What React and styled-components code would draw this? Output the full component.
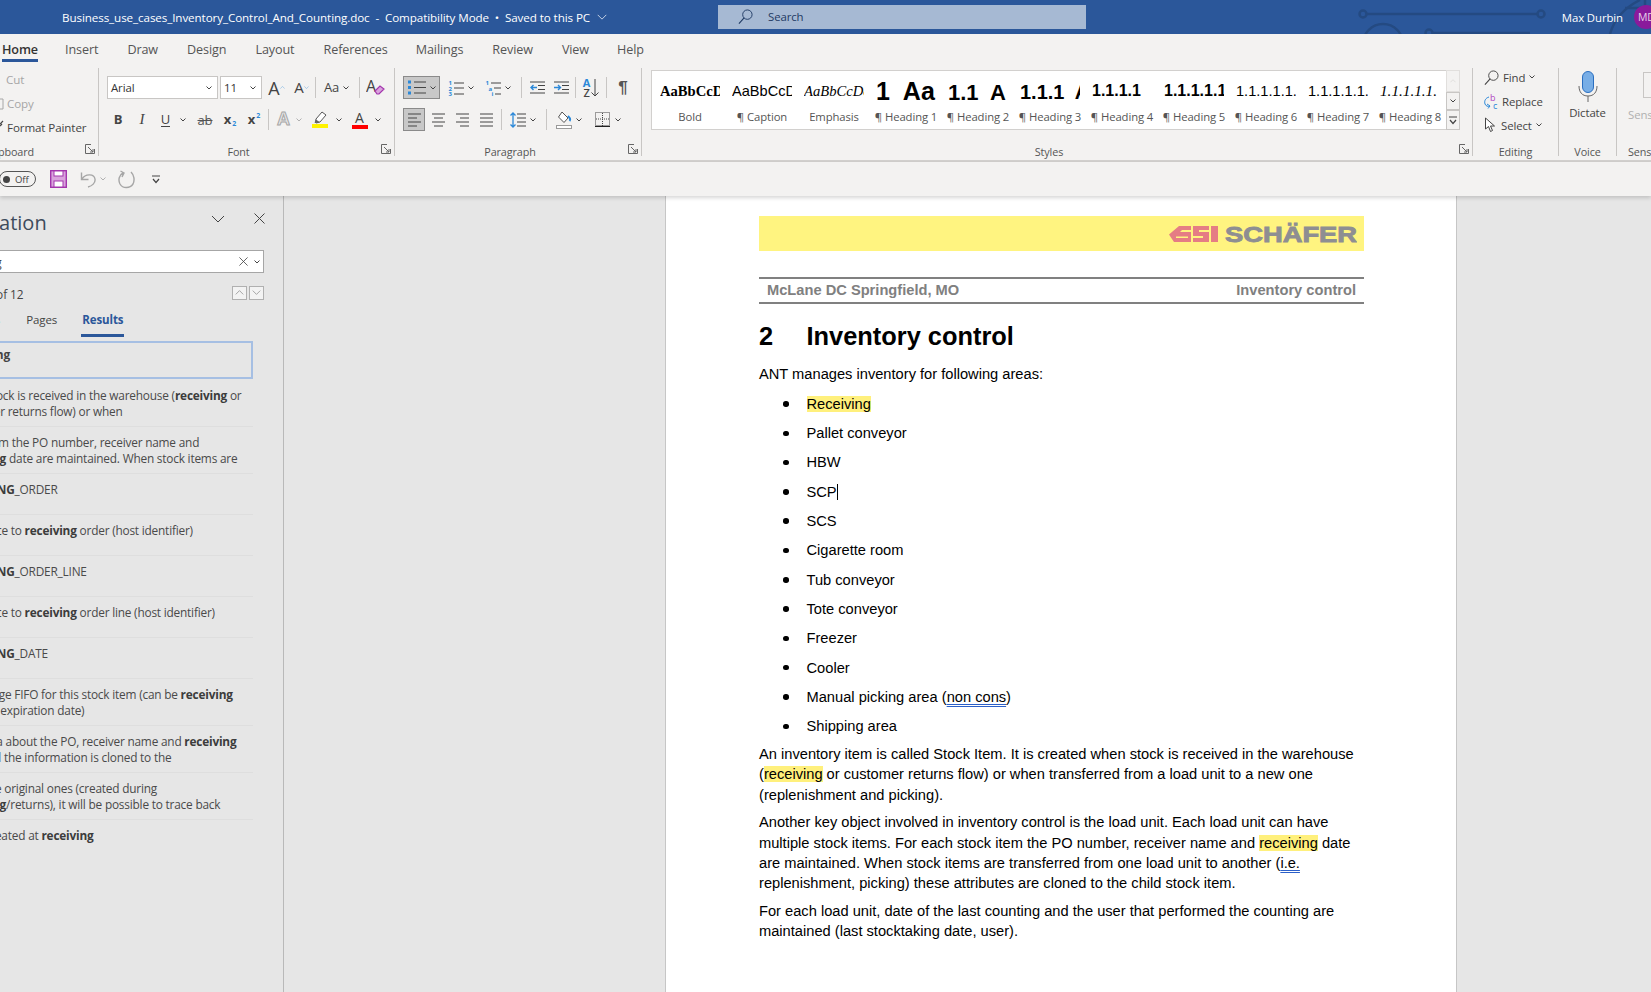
import React from "react";
import styled, { createGlobalStyle } from "styled-components";

const UI = `"Open Sans", "Noto Sans", sans-serif`;
const DOC = `"Liberation Sans", Arial, sans-serif`;
const SERIF = `"Liberation Serif", serif`;

const Global = createGlobalStyle`
  html, body { margin: 0; padding: 0; overflow: hidden; background: #e6e6e6; }
  * { box-sizing: border-box; }
`;

const App_ = styled.div`
  width: 1651px; height: 992px; display: flex; flex-direction: column; overflow: hidden;
  font-family: ${UI}; font-size: 11px; color: #444; letter-spacing: -0.1px;
`;

/* Title bar */
const TitleBar = styled.header`
  position: relative; flex: 0 0 34px; background: #2b579a; color: #fff; display: flex; align-items: center; padding-left: 62px; overflow: hidden;
`;
const DocTitle = styled.div`
  width: 656px; flex: none; display: flex; align-items: center; gap: 4px; white-space: pre; position: relative; font-size: 11.65px; color: #fff;
`;
const SearchBox = styled.div`
  width: 368px; height: 24px; background: #a6b9d3; color: #1f3a63; display: flex; align-items: center; gap: 15px; padding: 0 0 1px 20px; position: relative; font-size: 11.4px;
`;
const UserName = styled.div`
  margin-left: auto; position: relative; font-size: 11.4px; color: #fff; margin-right: 11px;
`;
const Avatar = styled.div`
  width: 24px; height: 24px; border-radius: 50%; background: #8a1a9b; color: #e6d3ea; font-size: 10.5px; display: flex; align-items: center; padding-left: 4px; flex: none; position: relative; margin-right: -7px; overflow: hidden;
`;
const Circuit = styled.svg`
  position: absolute; left: 1340px; top: 0;
`;

/* Tabs */
const TabBar = styled.nav`
  flex: 0 0 26px; min-height: 0; background: #f3f2f1; display: flex; padding-left: 2px; z-index: 3;
`;
const Tab = styled.div`
  margin-left: ${(p) => p.$ml}px; height: 28px; padding: 7px 0 0; font-size: 12.6px; line-height: 17px; color: ${(p) => (p.$active ? "#333" : "#555")}; font-weight: ${(p) => (p.$active ? 600 : 400)}; border-bottom: ${(p) => (p.$active ? "3px solid #2b579a" : "none")}; white-space: nowrap;
`;

/* Ribbon */
const Ribbon = styled.section`
  flex: 0 0 102px; background: #f3f2f1; border-bottom: 2px solid #d2d0ce; display: flex; padding-top: 8px; z-index: 2;
`;
const Group = styled.div`
  position: relative; flex: none; width: ${(p) => p.$w}px; height: 88px; border-right: 1px solid #c8c6c4; display: flex; flex-direction: column; ${(p) => p.$last && "border-right: none;"}
`;
const GroupBody = styled.div`
  height: 76px; padding: ${(p) => p.$pad || "8px 0 0 8px"}; display: flex; flex-direction: column; gap: ${(p) => p.$gap ?? 9}px;
`;
const ClipBody = styled.div`
  height: 76px; margin-top: -1px; margin-bottom: 1px; display: flex; flex-direction: column;
`;
const GroupLabel = styled.div`
  height: 12px; line-height: 15px; text-align: center; font-size: 10.8px; color: #555; white-space: nowrap; padding-right: ${(p) => p.$pr || 0}px; ${(p) => p.$clip && "text-align: left; margin-left: -14px;"} ${(p) => p.$left && "text-align: left; padding-left: 11px;"}
`;
const Launcher = styled.svg`
  position: absolute; right: 3px; bottom: 2px;
`;
const Row = styled.div`
  display: flex; align-items: center; height: 23px; flex: none;
`;
const Slot = styled.div`
  flex: none; width: ${(p) => p.$w}px; margin-left: ${(p) => p.$ml || 0}px; height: 23px; display: flex; align-items: center; justify-content: center; gap: ${(p) => p.$gap ?? 4}px; color: #444; position: relative;
`;
const PressedSlot = styled(Slot)`
  background: #c8c8c8; border: 1px solid #8a8a8a;
`;
const Sep = styled.div`
  flex: none; width: 1px; height: 21px; background: #c8c6c4; margin-left: ${(p) => p.$ml || 0}px;
`;
const Combo = styled.div`
  flex: none; width: ${(p) => p.$w}px; margin-left: ${(p) => p.$ml || 0}px; height: 23px; background: #fff; border: 1px solid #c8c6c4; display: flex; align-items: center; justify-content: space-between; padding: 0 5px 0 3px; font-size: 11.4px; color: #333;
`;
const ClipRow = styled.div`
  height: 24px; display: flex; align-items: center; gap: 3px; padding-left: ${(p) => (p.$icon ? 0 : 6)}px; font-size: 11.6px; color: ${(p) => (p.$dim ? "#a6a6a6" : "#444")}; white-space: nowrap;
`;
const GlyphA = styled.span`
  font-family: ${UI}; font-size: ${(p) => p.$s || 17}px; line-height: 1; color: #444; font-weight: ${(p) => p.$b || 400};
`;
const SerifI = styled.span`
  font-family: ${SERIF}; font-style: italic; font-size: 15px; color: #444;
`;
const UnderU = styled.span`
  font-size: 13px; color: #444; border-bottom: 1px solid #444; line-height: 14px;
`;
const StrikeAb = styled.span`
  font-size: 13px; color: #555; text-decoration: line-through;
`;
const Script = styled.span`
  font-size: 7px; color: #2b88d8; font-weight: 700; position: relative; top: ${(p) => p.$top}px; margin-left: 1px;
`;
const Effect = styled.span`
  font-family: ${DOC}; font-weight: 700; font-size: 18px; color: #e8e8e8; -webkit-text-stroke: 1px #a6a6a6;
`;
const ColorA = styled.span`
  display: flex; flex-direction: column; align-items: center; width: 16px; font-size: 14px; line-height: 13px; color: #444;
`;
const ColorBar = styled.i`
  display: block; width: 16px; height: 4px; background: ${(p) => p.$c}; margin-top: 1px;
`;
const Pilcrow = styled.span`
  font-family: ${DOC}; font-size: 17px; font-weight: 700; color: #555;
`;
const SortStack = styled.span`
  display: flex; flex-direction: column; line-height: 10px; font-size: 11px; font-weight: 600; align-items: center;
`;
const SortA = styled.b`
  color: #2b88d8; font-size: 11px; font-weight: 700;
`;

/* Styles */
const StylesBody = styled.div`
  padding: 2px 0 0 9px; height: 76px; display: flex;
`;
const Gallery = styled.div`
  width: 795px; height: 60px; background: #fff; border: 1px solid #d2d0ce; border-right: none; display: flex; padding-left: 2px; overflow: hidden;
`;
const StyleItem = styled.div`
  flex: none; width: 72px; display: flex; flex-direction: column; align-items: center;
`;
const Preview = styled.div`
  width: 60px; height: 30px; overflow: hidden; white-space: pre; padding-top: ${(p) => p.$top}px; font-family: ${(p) => (p.$serif ? SERIF : DOC)}; font-size: ${(p) => p.$s}px; line-height: ${(p) => p.$lh || 20}px; font-weight: ${(p) => (p.$b ? 700 : 400)}; font-style: ${(p) => (p.$i ? "italic" : "normal")}; color: #000; letter-spacing: 0;
`;
const StyleName = styled.div`
  margin-top: 8px; font-size: 11.3px; line-height: 16px; color: #555; white-space: nowrap;
`;
const ScrollCol = styled.div`
  width: 14px; height: 60px; display: flex; flex-direction: column;
`;
const ScrollBtn = styled.div`
  flex: ${(p) => p.$f}; border: 1px solid ${(p) => (p.$dim ? "#e1dfdd" : "#c8c6c4")}; background: #f3f2f1; display: flex; align-items: center; justify-content: center;
`;
const EditRow = styled.div`
  height: 20px; display: flex; align-items: center; gap: 4px; font-size: 11.4px; color: #444;
`;
const EditCol = styled.div`
  height: 76px; padding-left: 11px; margin-top: -1px; margin-bottom: 1px; display: flex; flex-direction: column; gap: 4px;
`;
const VoiceCol = styled.div`
  height: 76px; display: flex; flex-direction: column; align-items: center; padding-top: 3px; gap: 3px; font-size: 11.4px; color: #444;
`;
const SensCol = styled.div`
  height: 76px; padding: 4px 0 0 11px; display: flex; flex-direction: column; color: #b0b0b0; font-size: 11.4px; overflow: hidden; white-space: nowrap;
`;
const SensIcon = styled.div`
  width: 30px; height: 26px; border: 1px solid #c8c6c4; margin: 0 0 9px 15px; flex: none;
`;

/* QAT */
const Qat = styled.div`
  flex: 0 0 34px; background: #f3f2f1; display: flex; align-items: center; box-shadow: 0 2px 4px rgba(0,0,0,0.16); z-index: 2; position: relative;
`;
const Toggle = styled.div`
  width: 37px; height: 16px; margin-left: -1px; border: 1px solid #555; border-radius: 8px; display: flex; align-items: center; padding-left: 3px; gap: 5px; font-size: 9.5px; color: #444;
`;
const Dot = styled.i`
  width: 7px; height: 7px; border-radius: 50%; background: #444; display: block;
`;
const QatIcon = styled.div`
  margin-left: ${(p) => p.$ml}px; display: flex; align-items: center; flex: none;
`;

/* Workspace */
const Work = styled.main`
  flex: 1; min-height: 0; display: flex; background: #e6e6e6;
`;
const Pane = styled.aside`
  width: 284px; flex: none; border-right: 1px solid #b9b9b9; overflow: hidden; background: #e6e6e6;
`;
const PaneInner = styled.div`
  width: 333px; margin-left: -50px; color: #444;
`;
const PaneHead = styled.div`
  height: 54px; display: flex; align-items: center; position: relative; padding-left: 0;
`;
const PaneTitle = styled.div`
  font-size: 20px; color: #3d4b5c; letter-spacing: 0; margin: -2px 0 0 -3px;
`;
const PaneTools = styled.div`
  margin-left: auto; display: flex; align-items: center; gap: 29px; margin-top: -9px; margin-right: 18px;
`;
const PaneSearch = styled.div`
  height: 23px; width: 314px; background: #fff; border: 1px solid #a6a6a6; display: flex; align-items: center; padding: 0 3px 0 2px; font-size: 11.85px; color: #444;
`;
const PaneSearchTools = styled.div`
  margin-left: auto; display: flex; align-items: center; gap: 6px;
`;
const Status = styled.div`
  margin-top: 12px; height: 15px; display: flex; align-items: center; width: 314px; font-size: 11.85px; padding-top: 2px;
`;
const StepBtn = styled.div`
  width: 15px; height: 14px; border: 1px solid #b0b0b0; background: #f3f3f3; display: flex; align-items: center; justify-content: center; margin-top: -2px; margin-left: ${(p) => (p.$auto ? "auto" : "2px")};
`;
const PaneTabs = styled.div`
  margin-top: 8px; display: flex; height: 29px; padding-left: 22px;
`;
const PaneTab = styled.div`
  margin-left: ${(p) => p.$ml}px; padding: 4px 1px 0; height: 29px; line-height: 16px; font-size: 11.5px; color: ${(p) => (p.$active ? "#2b579a" : "#444")}; font-weight: ${(p) => (p.$active ? 700 : 400)}; border-bottom: ${(p) => (p.$active ? "3px solid #2b579a" : "none")};
`;
const Selected = styled.div`
  margin-top: 4px; width: 303px; height: 38px; border: 2px solid #a6bfe3; padding: 3px 0 0 5px; font-size: 11.85px; line-height: 16px; font-weight: 700; color: #444;
`;
const Results = styled.div`
  margin-top: 1px; width: 303px; padding-left: 4px;
`;
const Result = styled.div`
  padding: 7px 0 ${(p) => (p.$single ? 17 : 7)}px; border-bottom: 1px solid #dedede; font-size: 11.85px; line-height: 16px; white-space: nowrap; color: #4a4a4a; letter-spacing: -0.2px; ${(p) => p.$last && "border-bottom: none;"} b { color: #3c3c3c; }
`;
const Nudge = styled.span`
  margin-left: ${(p) => p.$x}px;
`;

const Canvas = styled.div`
  flex: 1; min-width: 0; padding-left: 381px;
`;
const Page = styled.article`
  width: 792px; height: 100%; background: #fff; border-left: 1px solid #c6c6c6; border-right: 1px solid #c6c6c6; padding: 20px 92px 0 93px; font-family: ${DOC}; font-size: 14.67px; line-height: 20.4px; color: #000; letter-spacing: 0;
`;
const Banner = styled.div`
  height: 35px; background: #fff480; display: flex; justify-content: flex-end; align-items: center; padding-right: 7px;
`;
const RunHead = styled.div`
  margin-top: 26px; height: 27px; border-top: 2px solid #808080; border-bottom: 2px solid #808080; display: flex; justify-content: space-between; align-items: center; padding: 0 8px; font-weight: 700; color: #808080;
`;
const H1 = styled.h1`
  margin: 12px 0 0; height: 40px; font-size: 25.4px; line-height: 40px; font-weight: 700; display: flex; color: #000;
`;
const HNum = styled.span`
  width: 47.5px; flex: none;
`;
const P = styled.p`
  margin: ${(p) => p.$mt}px 0 0;
`;
const Ul = styled.ul`
  margin: 5px 0 0; padding: 0 0 0 24px; list-style: none;
`;
const Li = styled.li`
  height: 29.3px; display: flex; align-items: center;
  &::before { content: ""; width: 5.5px; height: 5.5px; border-radius: 50%; background: #000; margin-right: 18px; flex: none; }
`;
const LiText = styled.span`
  line-height: 20.4px;
`;
const Mark = styled.mark`
  background: #fff07c; color: #000;
`;
const Proof = styled.span`
  text-decoration: underline double #2b5fc8; text-underline-offset: 2px;
`;
const Cursor = styled.i`
  display: inline-block; width: 1px; height: 16px; background: #000; vertical-align: -3px;
`;
const LogoSvg = styled.svg`
  display: block;
`;

/* Icons */
const Caret = ({ c = "#444", w = 6 }) => (
  <svg width={w} height="4" viewBox="0 0 6 4"><polyline points="0.5,0.5 3,3 5.5,0.5" fill="none" stroke={c} strokeWidth="1" /></svg>
);
const Launch = () => (
  <Launcher width="10" height="10" viewBox="0 0 10 10"><path d="M9.5 9.5H.5V.5H6M9.5 9.5V5M3 3l5 5M8 5v3H5" fill="none" stroke="#666" strokeWidth="1" /></Launcher>
);
const Lines = ({ items, w = 15 }) => (
  <svg width={w} height="15" viewBox={`0 0 ${w} 15`}>
    {items.map(([x1, x2, y], i) => <line key={i} x1={x1} x2={x2} y1={y} y2={y} stroke="#444" strokeWidth="1" />)}
  </svg>
);
const Bullets = () => (
  <svg width="18" height="15" viewBox="0 0 18 15">
    {[2, 7.5, 13].map((y) => (<g key={y}><rect x="0" y={y - 1.5} width="3" height="3" fill="#2b88d8" /><line x1="6" x2="18" y1={y} y2={y} stroke="#444" /></g>))}
  </svg>
);
const Numbered = ({ multi }) => (
  <svg width="16" height="16" viewBox="0 0 16 16" fontFamily="Open Sans" fontSize="6" fontWeight="700" fill="#2b88d8">
    <text x="0.500" y="5">1</text>
    <text x={multi ? 3.5 : 0.5} y="10.500">{multi ? "a" : "2"}</text>
    <text x={multi ? 6.5 : 0.5} y="16">{multi ? "i" : "3"}</text>
    <line x1="6" x2="16" y1="3" y2="3" stroke="#444" />
    <line x1={multi ? 9 : 6} x2="16" y1="8" y2="8" stroke="#444" />
    <line x1={multi ? 10 : 6} x2="16" y1="14" y2="14" stroke="#444" />
  </svg>
);
const Indent = ({ inc }) => (
  <svg width="15" height="13" viewBox="0 0 15 13">
    <line x1="0" x2="15" y1="1" y2="1" stroke="#444" /><line x1="0" x2="15" y1="12" y2="12" stroke="#444" />
    <line x1="8" x2="15" y1="4.5" y2="4.5" stroke="#444" /><line x1="8" x2="15" y1="8.5" y2="8.5" stroke="#444" />
    <path d={inc ? "M0 6.5h6M4 4l2.5 2.5L4 9" : "M7 6.5H1M3.5 4L1 6.5 3.5 9"} fill="none" stroke="#2b88d8" strokeWidth="1.4" />
  </svg>
);
const LineSpacing = () => (
  <svg width="16" height="16" viewBox="0 0 16 16">
    <path d="M3 1v14M.5 3.5L3 1l2.5 2.5M.5 12.5L3 15l2.5-2.5" fill="none" stroke="#2b88d8" strokeWidth="1.3" />
    {[2, 6, 10, 14].map((y) => <line key={y} x1="7" x2="16" y1={y} y2={y} stroke="#444" />)}
  </svg>
);
const Shading = () => (
  <svg width="16" height="18" viewBox="0 0 16 18">
    <path d="M6 1l6 6-4 4.5-5.5-5.5z" fill="#fff" stroke="#555" />
    <path d="M12 5c2 2 2.5 4 1.5 5" fill="none" stroke="#2b88d8" strokeWidth="2" />
    <rect x=".5" y="14.5" width="15" height="3" fill="#fff" stroke="#9a9a9a" />
  </svg>
);
const Borders = () => (
  <svg width="15" height="15" viewBox="0 0 15 15">
    <rect x=".5" y=".5" width="14" height="13" fill="none" stroke="#444" strokeDasharray="1 1" />
    <path d="M7.5 1v13M1 7h13" stroke="#444" strokeDasharray="1 1" />
    <line x1="0" x2="15" y1="14.5" y2="14.5" stroke="#222" />
  </svg>
);
const Eraser = () => (
  <svg width="19" height="17" viewBox="0 0 19 17">
    <text x="0" y="13" fontFamily="Open Sans" fontSize="16" fill="#444">A</text>
    <path d="M9 12l5-5 4 3-5 5h-2z" fill="#d9a3dd" stroke="#a336ad" strokeWidth="1.2" />
  </svg>
);
const Highlighter = () => (
  <svg width="16" height="17" viewBox="0 0 16 17">
    <path d="M10 1l4 3-6 7-4 1-.5-1 .5-3z" fill="#fff" stroke="#555" />
    <path d="M4 8.5l3.5 2.5-4 1-1-.5z" fill="#666" />
    <rect x="0" y="13" width="16" height="4" fill="#fff200" />
  </svg>
);
const Mag = ({ s = 16, c = "#444" }) => (
  <svg width={s} height={s} viewBox="0 0 16 16"><circle cx="10" cy="6" r="5" fill="none" stroke={c} /><line x1="6.5" y1="9.5" x2="1" y2="15.5" stroke={c} strokeWidth="1.2" /></svg>
);
const ReplaceIcon = () => (
  <svg width="14" height="17" viewBox="0 0 14 17">
    <text x="6" y="8" fontFamily="Open Sans" fontSize="9" fill="#b146c2">b</text>
    <text x="9" y="16" fontFamily="Open Sans" fontSize="9" fill="#2b88d8">c</text>
    <path d="M5 4C1.5 5 0 8 1 11c.8 2 3 3 5 2M3 11l3 2-2 2.500" fill="none" stroke="#2b88d8" />
  </svg>
);
const Arrow = () => (
  <svg width="13" height="16" viewBox="0 0 13 16"><path d="M1.500 1v11l3-2.500 2 5 2-1-2-4.500h4z" fill="#fff" stroke="#444" /></svg>
);
const Mic = () => (
  <svg width="20" height="31" viewBox="0 0 20 31">
    <rect x="4.500" y="0.500" width="11" height="21" rx="5.500" fill="#78aee6" stroke="#2b6fc0" />
    <path d="M1 15c0 6 3 10 9 10s9-4 9-10" fill="none" stroke="#666" />
    <line x1="10" y1="25" x2="10" y2="31" stroke="#666" />
  </svg>
);
const Save = () => (
  <svg width="17" height="18" viewBox="0 0 17 18">
    <rect x=".7" y=".7" width="15.600" height="16.600" fill="#d9a3dd" stroke="#a336ad" strokeWidth="1.400" />
    <rect x="4" y="1" width="9" height="5" fill="#fff" stroke="#a336ad" />
    <rect x="4" y="11" width="9" height="6" fill="#fff" stroke="#a336ad" />
  </svg>
);
const Undo = () => (
  <svg width="16" height="17" viewBox="0 0 16 17"><path d="M2 8c3-5 12-6 13 0 .6 4-3 7-7 8M1.500 1.500V8.500h7" fill="none" stroke="#a6a6a6" strokeWidth="1.400" /></svg>
);
const Redo = () => (
  <svg width="17" height="19" viewBox="0 0 17 19"><path d="M5 3C1 5 0 10 2 14c3 5 10 4.500 13 0 2-4 1-9-2-12M2.500 1L6 3 4 7" fill="none" stroke="#a6a6a6" strokeWidth="1.400" /></svg>
);
const Customize = () => (
  <svg width="8" height="9" viewBox="0 0 8 9"><line x1="0" x2="8" y1="1" y2="1" stroke="#444" /><polyline points="1,4 4,7.500 7,4" fill="none" stroke="#444" strokeWidth="1.200" /></svg>
);
const Close = ({ s = 11, c = "#444" }) => (
  <svg width={s} height={s} viewBox="0 0 11 11"><path d="M.5.5l10 10M10.500.5l-10 10" stroke={c} /></svg>
);
const Chev = ({ up, w = 14, h = 8, c = "#444" }) => (
  <svg width={w} height={h} viewBox="0 0 14 8"><polyline points={up ? "1,7 7,1 13,7" : "1,1 7,7 13,1"} fill="none" stroke={c} /></svg>
);
const CopySliver = () => (
  <svg width="4" height="14" viewBox="0 0 4 14"><path d="M0 3h3v10H0" fill="none" stroke="#a6a6a6" /></svg>
);
const BrushSliver = () => (
  <svg width="4" height="14" viewBox="0 0 4 14"><path d="M0 4l3-3M0 6l2-2" fill="none" stroke="#444" strokeWidth="1.200" /></svg>
);

const Logo = () => (
  <LogoSvg width="188" height="26" viewBox="0 0 188 26">
    <g transform="translate(0 5)">
      <path d="M0 8.500L10 0h12v4h-9l-2 2h11v10H5z" fill="#e57d84" />
      <path d="M24 0h16v4H30v2h10v10H24v-4h10v-2H24z" fill="#e57d84" />
      <rect x="42" y="0" width="7" height="16" fill="#e57d84" />
      <rect x="7" y="10.500" width="12" height="1.500" fill="#fff480" />
    </g>
    <text x="56" y="21" fontFamily={DOC} fontWeight="700" fontSize="22" fill="#8e8e92" stroke="#8e8e92" strokeWidth="0.900" textLength="132" lengthAdjust="spacingAndGlyphs">SCHÄFER</text>
  </LogoSvg>
);

const styleItems = [
  { name: "Bold", text: "AaBbCcDd", serif: true, b: true, s: 14.6, top: 10 },
  { name: "¶ Caption", text: "AaBbCcDd", s: 14.6, top: 10 },
  { name: "Emphasis", text: "AaBbCcDd", serif: true, i: true, s: 14.6, top: 10 },
  { name: "¶ Heading 1", text: "1  Aa", b: true, s: 25, top: 5, lh: 30 },
  { name: "¶ Heading 2", text: "1.1  A", b: true, s: 22, top: 8, lh: 28 },
  { name: "¶ Heading 3", text: "1.1.1  A", b: true, s: 20, top: 9, lh: 24 },
  { name: "¶ Heading 4", text: "1.1.1.1", b: true, s: 16, top: 10 },
  { name: "¶ Heading 5", text: "1.1.1.1.1", b: true, s: 16, top: 10 },
  { name: "¶ Heading 6", text: "1.1.1.1.1.", s: 14.6, top: 10 },
  { name: "¶ Heading 7", text: "1.1.1.1.1.", s: 14.6, top: 10 },
  { name: "¶ Heading 8", text: "1.1.1.1.1.", serif: true, i: true, s: 15.2, top: 10 },
];
const tabs = [["Home", 0], ["Insert", 27], ["Draw", 29], ["Design", 29], ["Layout", 29], ["References", 29], ["Mailings", 28], ["Review", 29], ["View", 29], ["Help", 28]];
const areas = ["Pallet conveyor", "HBW"];
const areas2 = ["SCS", "Cigarette room", "Tub conveyor", "Tote conveyor", "Freezer", "Cooler"];

export default function App() {
  return (
    <App_>
      <Global />
      <TitleBar>
        <Circuit width="311" height="36" viewBox="0 0 311 36">
          <g fill="none" stroke="#244a82" strokeWidth="2.500">
            <circle cx="23" cy="14" r="3.500" /><line x1="27" x2="197" y1="14" y2="14" /><circle cx="201" cy="14" r="3.500" />
            <circle cx="43" cy="44" r="20" /><circle cx="89" cy="33" r="3.500" /><line x1="93" x2="190" y1="33" y2="33" />
            <path d="M270 34c4-14 14-26 30-34M285 8h26M305 0v20" />
          </g>
        </Circuit>
        <DocTitle>
          Business_use_cases_Inventory_Control_And_Counting.doc  -  Compatibility Mode  •  Saved to this PC <Chev w={10} h={6} c="#fff" />
        </DocTitle>
        <SearchBox><Mag s={15} c="#1f3a63" />Search</SearchBox>
        <UserName>Max Durbin</UserName>
        <Avatar>MD</Avatar>
      </TitleBar>

      <TabBar>
        {tabs.map(([t, ml], i) => <Tab key={t} $ml={ml} $active={i === 0}>{t}</Tab>)}
      </TabBar>

      <Ribbon>
        <Group $w={99}>
          <ClipBody>
            <ClipRow $dim>Cut</ClipRow>
            <ClipRow $dim $icon><CopySliver />Copy</ClipRow>
            <ClipRow $icon><BrushSliver />Format Painter</ClipRow>
          </ClipBody>
          <GroupLabel $clip>Clipboard</GroupLabel>
          <Launch />
        </Group>

        <Group $w={296}>
          <GroupBody>
            <Row>
              <Combo $w={111}>Arial<Caret /></Combo>
              <Combo $w={42} $ml={2}>11<Caret /></Combo>
              <Slot $w={23} $ml={3} $gap={0}><GlyphA $s={18}>A</GlyphA><Chev w={5} h={3} c="#2b88d8" up /></Slot>
              <Slot $w={19} $ml={4} $gap={0}><GlyphA $s={15}>A</GlyphA><Chev w={5} h={3} c="#2b88d8" /></Slot>
              <Sep $ml={4} />
              <Slot $w={35} $ml={3}><GlyphA $s={13}>Aa</GlyphA><Caret /></Slot>
              <Sep $ml={5} />
              <Slot $w={24} $ml={3}><Eraser /></Slot>
            </Row>
            <Row>
              <Slot $w={22}><GlyphA $s={13} $b={700}>B</GlyphA></Slot>
              <Slot $w={22} $ml={2}><SerifI>I</SerifI></Slot>
              <Slot $w={21} $ml={2}><UnderU>U</UnderU></Slot>
              <Slot $w={14}><Caret /></Slot>
              <Slot $w={22} $ml={4}><StrikeAb>ab</StrikeAb></Slot>
              <Slot $w={22} $ml={3} $gap={0}><GlyphA $s={13} $b={700}>x</GlyphA><Script $top={4}>2</Script></Slot>
              <Slot $w={22} $ml={2} $gap={0}><GlyphA $s={13} $b={700}>x</GlyphA><Script $top={-4}>2</Script></Slot>
              <Sep $ml={3} />
              <Slot $w={23} $ml={3}><Effect>A</Effect></Slot>
              <Slot $w={8}><Caret c="#b0b0b0" /></Slot>
              <Slot $w={28} $ml={3}><Highlighter /></Slot>
              <Slot $w={10}><Caret /></Slot>
              <Slot $w={27} $ml={2}><ColorA>A<ColorBar $c="#ff0000" /></ColorA></Slot>
              <Slot $w={10}><Caret /></Slot>
            </Row>
          </GroupBody>
          <GroupLabel $pr={16}>Font</GroupLabel>
          <Launch />
        </Group>

        <Group $w={247}>
          <GroupBody>
            <Row>
              <PressedSlot $w={37}><Bullets /><Caret /></PressedSlot>
              <Slot $w={35} $ml={3}><Numbered /><Caret /></Slot>
              <Slot $w={36} $ml={2}><Numbered multi /><Caret /></Slot>
              <Sep $ml={5} />
              <Slot $w={22} $ml={4}><Indent /></Slot>
              <Slot $w={22} $ml={2}><Indent inc /></Slot>
              <Sep $ml={3} />
              <Slot $w={24} $ml={3} $gap={1}><SortStack><SortA>A</SortA>Z</SortStack>
                <svg width="8" height="18" viewBox="0 0 8 18"><path d="M4 0v17M.5 13.500L4 17l3.500-3.500" fill="none" stroke="#444" /></svg>
              </Slot>
              <Sep $ml={3} />
              <Slot $w={24} $ml={4}><Pilcrow>¶</Pilcrow></Slot>
            </Row>
            <Row>
              <PressedSlot $w={22}><Lines items={[[1, 14, 2], [1, 10, 6], [1, 14, 10], [1, 10, 14]]} /></PressedSlot>
              <Slot $w={22} $ml={2}><Lines items={[[1, 14, 2], [3, 12, 6], [1, 14, 10], [3, 12, 14]]} /></Slot>
              <Slot $w={22} $ml={2}><Lines items={[[1, 14, 2], [5, 14, 6], [1, 14, 10], [5, 14, 14]]} /></Slot>
              <Slot $w={22} $ml={2}><Lines items={[[1, 14, 2], [1, 14, 6], [1, 14, 10], [1, 14, 14]]} /></Slot>
              <Sep $ml={4} />
              <Slot $w={36} $ml={3}><LineSpacing /><Caret /></Slot>
              <Sep $ml={5} />
              <Slot $w={37} $ml={3}><Shading /><Caret /></Slot>
              <Slot $w={36} $ml={3} $gap={5}><Borders /><Caret /></Slot>
            </Row>
          </GroupBody>
          <GroupLabel $pr={16}>Paragraph</GroupLabel>
          <Launch />
        </Group>

        <Group $w={831}>
          <StylesBody>
            <Gallery>
              {styleItems.map((it) => (
                <StyleItem key={it.name}>
                  <Preview $serif={it.serif} $b={it.b} $i={it.i} $s={it.s} $top={it.top} $lh={it.lh}>{it.text}</Preview>
                  <StyleName>{it.name}</StyleName>
                </StyleItem>
              ))}
            </Gallery>
            <ScrollCol>
              <ScrollBtn $f={22} $dim><Chev up w={6} h={4} c="#c8c6c4" /></ScrollBtn>
              <ScrollBtn $f={18}><Caret /></ScrollBtn>
              <ScrollBtn $f={20}><Customize /></ScrollBtn>
            </ScrollCol>
          </StylesBody>
          <GroupLabel $pr={16}>Styles</GroupLabel>
          <Launch />
        </Group>

        <Group $w={86}>
          <EditCol>
            <EditRow><Mag s={15} />Find <Caret /></EditRow>
            <EditRow><ReplaceIcon />Replace</EditRow>
            <EditRow><Arrow />Select <Caret /></EditRow>
          </EditCol>
          <GroupLabel>Editing</GroupLabel>
        </Group>

        <Group $w={58}>
          <VoiceCol><Mic />Dictate</VoiceCol>
          <GroupLabel>Voice</GroupLabel>
        </Group>

        <Group $w={60} $last>
          <SensCol><SensIcon />Sensitivity</SensCol>
          <GroupLabel $left>Sensitivity</GroupLabel>
        </Group>
      </Ribbon>

      <Qat>
        <Toggle><Dot />Off</Toggle>
        <QatIcon $ml={14}><Save /></QatIcon>
        <QatIcon $ml={13}><Undo /></QatIcon>
        <QatIcon $ml={4}><Caret c="#b0b0b0" /></QatIcon>
        <QatIcon $ml={12}><Redo /></QatIcon>
        <QatIcon $ml={17}><Customize /></QatIcon>
      </Qat>

      <Work>
        <Pane>
          <PaneInner>
            <PaneHead>
              <PaneTitle>Navigation</PaneTitle>
              <PaneTools><Chev /><Close s={11} /></PaneTools>
            </PaneHead>
            <PaneSearch>receiving
              <PaneSearchTools><Close s={9} /><Caret /></PaneSearchTools>
            </PaneSearch>
            <Status>Result 1 of 12
              <StepBtn $auto><Chev up w={9} h={5} c="#777" /></StepBtn>
              <StepBtn><Chev w={9} h={5} c="#777" /></StepBtn>
            </Status>
            <PaneTabs>
              <PaneTab $ml={-22}>Headings</PaneTab>
              <PaneTab $ml={24}>Pages</PaneTab>
              <PaneTab $ml={23} $active>Results</PaneTab>
            </PaneTabs>
            <Selected>receiving</Selected>
            <Results>
              <Result>when stock is received in the warehouse (<b>receiving</b> or<br />customer returns flow) or when</Result>
              <Result>stock item the PO number, receiver name and<br /><b>receiving</b> date are maintained. When stock items are</Result>
              <Result $single><b>RECEIVING</b>_ORDER</Result>
              <Result $single>Reference to <b>receiving</b> order (host identifier)</Result>
              <Result $single><b>RECEIVING</b>_ORDER_LINE</Result>
              <Result $single>Reference to <b>receiving</b> order line (host identifier)</Result>
              <Result $single><b>RECEIVING</b>_DATE</Result>
              <Result><Nudge $x={-30}>Used to manage FIFO for this stock item (can be <b>receiving</b></Nudge><br /><Nudge $x={5}>date or expiration date)</Nudge></Result>
              <Result><Nudge $x={-25}>Contains data about the PO, receiver name and <b>receiving</b></Nudge><br />dates, all the information is cloned to the</Result>
              <Result><Nudge $x={-19}>linked to the original ones (created during</Nudge><br /><b>receiving</b>/returns), it will be possible to trace back</Result>
              <Result $last><Nudge $x={29}>Created at <b>receiving</b></Nudge></Result>
            </Results>
          </PaneInner>
        </Pane>
        <Canvas>
          <Page>
            <Banner><Logo /></Banner>
            <RunHead><span>McLane DC Springfield, MO</span><span>Inventory control</span></RunHead>
            <H1><HNum>2</HNum>Inventory control</H1>
            <P $mt={8}>ANT manages inventory for following areas:</P>
            <Ul>
              <Li><LiText><Mark>Receiving</Mark></LiText></Li>
              {areas.map((a) => <Li key={a}><LiText>{a}</LiText></Li>)}
              <Li><LiText>SCP<Cursor /></LiText></Li>
              {areas2.map((a) => <Li key={a}><LiText>{a}</LiText></Li>)}
              <Li><LiText>Manual picking area (<Proof>non cons</Proof>)</LiText></Li>
              <Li><LiText>Shipping area</LiText></Li>
            </Ul>
            <P $mt={3}>An inventory item is called Stock Item. It is created when stock is received in the warehouse (<Mark>receiving</Mark> or customer returns flow) or when transferred from a load unit to a new one (replenishment and picking).</P>
            <P $mt={7}>Another key object involved in inventory control is the load unit. Each load unit can have multiple stock items. For each stock item the PO number, receiver name and <Mark>receiving</Mark> date are maintained. When stock items are transferred from one load unit to another (<Proof>i.e.</Proof> replenishment, picking) these attributes are cloned to the child stock item.</P>
            <P $mt={7}>For each load unit, date of the last counting and the user that performed the counting are maintained (last stocktaking date, user).</P>
          </Page>
        </Canvas>
      </Work>
    </App_>
  );
}
